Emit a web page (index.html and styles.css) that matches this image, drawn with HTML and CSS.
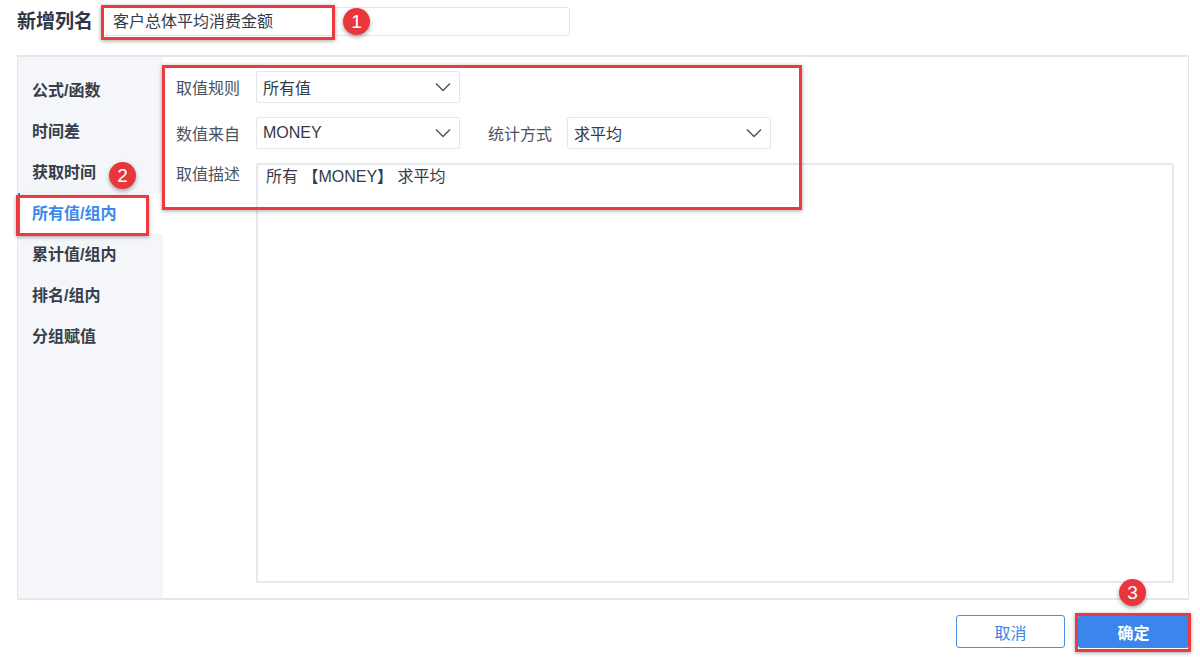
FILE: index.html
```html
<!DOCTYPE html>
<html lang="zh-CN">

<head>
    <meta charset="UTF-8">
    <title>新增列名</title>
    <link rel="stylesheet" href="styles.css">
</head>

<body>

    <!-- Column name -->
    <div class="name-row">
        <h1>新增列名</h1>
        <div class="name-input">客户总体平均消费金额</div>
        <span class="mark mark-name"></span>
        <span class="badge badge-1">1</span>
    </div>

    <div class="panel">
        <!-- Left menu -->
        <ul class="side">
            <li>公式/函数</li>
            <li>时间差</li>
            <li>获取时间</li>
            <li class="active">所有值/组内</li>
            <li>累计值/组内</li>
            <li>排名/组内</li>
            <li>分组赋值</li>
            <span class="mark mark-side"></span>
            <span class="badge badge-2">2</span>
        </ul>

        <!-- Form -->
        <div class="main">
            <div class="row">
                <label>取值规则</label>
                <div class="select">所有值<svg viewBox="0 0 16 10"><path d="M1 1.5 8 8.5 15 1.5" /></svg></div>
            </div>
            <div class="row">
                <label>数值来自</label>
                <div class="select">MONEY<svg viewBox="0 0 16 10"><path d="M1 1.5 8 8.5 15 1.5" /></svg></div>
                <label class="label-2">统计方式</label>
                <div class="select">求平均<svg viewBox="0 0 16 10"><path d="M1 1.5 8 8.5 15 1.5" /></svg></div>
            </div>
            <div class="row row-desc">
                <label>取值描述</label>
                <div class="desc">所有 【MONEY】 求平均</div>
            </div>
            <span class="mark mark-form"></span>
        </div>
    </div>

    <!-- Footer buttons -->
    <div class="footer">
        <button class="btn btn-cancel">取消</button>
        <button class="btn btn-ok">确定</button>
        <span class="mark mark-ok"></span>
        <span class="badge badge-3">3</span>
    </div>

</body>

</html>
```

FILE: styles.css
```css
* {
    margin: 0;
    padding: 0;
    box-sizing: border-box;
}

body {
    font-family: "Liberation Sans", "Noto Sans CJK SC", sans-serif;
    color: #333a48;
    background-color: #fff;
    width: 1200px;
    height: 657px;
    overflow: hidden;
}

/* Top row */
.name-row {
    position: relative;
    display: flex;
    align-items: center;
    padding: 7px 0 0 17px;
}

h1 {
    font-size: 19px;
    font-weight: bold;
    color: #2f3645;
    margin-right: 9px;
    line-height: 28px;
}

.name-input {
    width: 468px;
    height: 29px;
    border: 1px solid #e3e5ea;
    border-radius: 2px;
    padding-left: 10px;
    font-size: 16px;
    line-height: 27px;
    color: #333a48;
}

/* Red highlight boxes */
.mark {
    position: absolute;
    border: 3px solid #ec3b40;
    box-shadow: 0 1px 4px rgba(0, 0, 0, 0.35);
    pointer-events: none;
}

.mark-name {
    left: 101px;
    top: 5px;
    width: 234px;
    height: 35px;
}

.mark-side {
    left: -2px;
    top: 138px;
    width: 133px;
    height: 41px;
}

.mark-form {
    left: -1px;
    top: 8px;
    width: 640px;
    height: 145px;
}

.mark-ok {
    right: 9px;
    top: 13px;
    width: 116px;
    height: 39px;
}

/* Numbered badges */
.badge {
    position: absolute;
    width: 27px;
    height: 27px;
    border-radius: 50%;
    background-color: #e8363c;
    color: #fff;
    font-family: "Liberation Sans", Arial, sans-serif;
    font-size: 19px;
    line-height: 27px;
    text-align: center;
    box-shadow: 0 2px 4px rgba(0, 0, 0, 0.35);
}

.badge-1 {
    left: 343px;
    top: 8px;
}

.badge-2 {
    left: 91px;
    top: 105px;
}

.badge-3 {
    right: 54px;
    top: -21px;
}

/* Main panel */
.panel {
    display: flex;
    margin: 19px 0 0 17px;
    width: 1172px;
    height: 545px;
    border: 1px solid #e4e6ec;
    border-top-width: 2px;
    border-bottom-width: 2px;
}

.side {
    position: relative;
    list-style: none;
    width: 145px;
    background-color: #f5f6f9;
    padding-top: 13px;
}

.side li {
    height: 41px;
    line-height: 41px;
    padding-left: 14px;
    font-size: 16px;
    font-weight: bold;
    color: #363d4b;
}

.side li.active {
    background-color: #fff;
    color: #3b87ee;
    border-left: 2px solid #3b7fe6;
    padding-left: 12px;
}

.main {
    position: relative;
    flex: 1;
    display: flex;
    flex-direction: column;
    padding: 14px 14px 15px 13px;
}

.row {
    display: flex;
    align-items: center;
    margin-bottom: 14px;
}

.row label {
    width: 80px;
    font-size: 16px;
    color: #4a5262;
}

.row .label-2 {
    margin-left: 28px;
    width: 79px;
}

.select {
    display: flex;
    align-items: center;
    justify-content: space-between;
    width: 204px;
    height: 32px;
    border: 1px solid #e5e7ec;
    border-radius: 2px;
    padding: 0 8px 0 6px;
    font-size: 16px;
    color: #333a48;
}

.select svg {
    width: 16px;
    height: 10px;
    fill: none;
    stroke: #4e5666;
    stroke-width: 1.5;
}

.row-desc {
    flex: 1;
    align-items: stretch;
    margin-bottom: 0;
}

.row-desc label {
    line-height: 24px;
}

.desc {
    flex: 1;
    border: 2px solid #e6e8ed;
    border-radius: 2px;
    padding: 0 8px;
    font-size: 16px;
    line-height: 24px;
    color: #333a48;
}

/* Footer */
.footer {
    position: relative;
    display: flex;
    justify-content: flex-end;
    gap: 13px;
    padding: 15px 11px 0 0;
}

.btn {
    width: 109px;
    height: 33px;
    font-family: inherit;
    font-size: 16px;
    border-radius: 3px;
    cursor: pointer;
}

.btn-cancel {
    background-color: #fff;
    border: 1px solid #4b8fe8;
    color: #3a84e6;
}

.btn-ok {
    width: 111px;
    background-color: #3a86ec;
    border: none;
    color: #fff;
    font-weight: bold;
}
```
